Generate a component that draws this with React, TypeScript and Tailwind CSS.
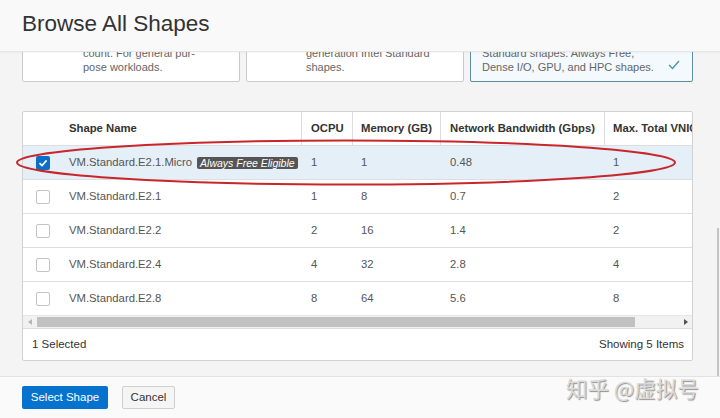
import React from 'react';

interface ShapeRow {
  name: string;
  ocpu: string;
  memory: string;
  bandwidth: string;
  vnics: string;
  free?: boolean;
}

const rows: ShapeRow[] = [
  { name: 'VM.Standard.E2.1.Micro', ocpu: '1', memory: '1', bandwidth: '0.48', vnics: '1', free: true },
  { name: 'VM.Standard.E2.1', ocpu: '1', memory: '8', bandwidth: '0.7', vnics: '2' },
  { name: 'VM.Standard.E2.2', ocpu: '2', memory: '16', bandwidth: '1.4', vnics: '2' },
  { name: 'VM.Standard.E2.4', ocpu: '4', memory: '32', bandwidth: '2.8', vnics: '4' },
  { name: 'VM.Standard.E2.8', ocpu: '8', memory: '64', bandwidth: '5.6', vnics: '8' },
];

const cols = 'grid grid-cols-[37px_241px_51px_88px_164px_120px] w-[701px]';

function Checkbox({ checked }: { checked?: boolean }) {
  if (checked) {
    return (
      <div className="w-[14px] h-[14px] rounded-[2px] bg-[#0a6fc9] flex items-center justify-center">
        <svg width="10" height="10" viewBox="0 0 10 10">
          <polyline points="1.5,5.2 4,7.6 8.6,2.4" fill="none" stroke="#fff" strokeWidth="1.6" />
        </svg>
      </div>
    );
  }
  return <div className="w-[14px] h-[14px] rounded-[2px] border border-[#c4c4c4] bg-white" />;
}

export default function App() {
  return (
    <div className="relative w-[720px] h-[418px] flex flex-col overflow-hidden font-['Liberation_Sans',Arial,sans-serif] text-[#333]">
      {/* Dialog header */}
      <div className="h-[52px] shrink-0 bg-[#f9f9f9] border-b border-[#e6e6e6] flex items-center px-[22px] shadow-[0_1px_2px_rgba(0,0,0,0.04)] z-10">
        <h1 className="text-[22.5px] text-[#333] leading-none -mt-[2px]">Browse All Shapes</h1>
      </div>

      {/* Scrolled content */}
      <div className="relative flex-1 bg-[#f4f4f4] overflow-hidden pl-[22px] pr-[27px] border-b border-[#e2e2e2]">
        {/* Shape series cards, scrolled past the top */}
        <div className="grid grid-cols-[218px_218px_1fr] gap-[6px] -mt-[29px]">
          <div className="bg-white border border-[#cccccc] rounded-[2px] pl-[60px] pr-3 pt-[22px] pb-[7px] text-[11px] leading-[14px] text-[#666]">
            <span className="block">count. For general pur-</span>
            <span className="block">pose workloads.</span>
          </div>
          <div className="bg-white border border-[#cccccc] rounded-[2px] pl-[59px] pr-3 pt-[22px] pb-[7px] text-[11px] leading-[14px] text-[#666]">
            <span className="block">generation Intel Standard</span>
            <span className="block">shapes.</span>
          </div>
          <div className="bg-[#f3f9fc] border border-[#5f8e9c] rounded-[2px] pl-[11px] pr-[12px] pt-[22px] pb-[7px] text-[11px] leading-[14px] text-[#666] flex items-end justify-between">
            <div>
              <span className="block">Standard shapes. Always Free,</span>
              <span className="block">Dense I/O, GPU, and HPC shapes.</span>
            </div>
            <svg width="12" height="10" viewBox="0 0 12 10" className="mb-[4px]">
              <polyline points="1,5 4.5,8.5 11,1" fill="none" stroke="#4f93a8" strokeWidth="1.4" />
            </svg>
          </div>
        </div>

        {/* Shapes table */}
        <div className="mt-[29px] bg-white border border-[#d2d2d2] rounded-[2px] overflow-hidden">
          <div className="overflow-hidden">
            <div className={`${cols} h-[33px] text-[11.3px] font-bold text-[#333]`}>
              <div />
              <div className="flex items-center pl-[9px]">Shape Name</div>
              <div className="flex items-center pl-[9px] border-l border-[#dcdcdc]">OCPU</div>
              <div className="flex items-center pl-[8px] border-l border-[#dcdcdc]">Memory (GB)</div>
              <div className="flex items-center pl-[9px] border-l border-[#dcdcdc]">Network Bandwidth (Gbps)</div>
              <div className="flex items-center pl-[8px] border-l border-[#dcdcdc] whitespace-nowrap">Max. Total VNICs</div>
            </div>
            {rows.map((row) => (
              <div
                key={row.name}
                className={`${cols} h-[34px] border-t border-[#dedede] text-[11.3px] text-[#555] ${row.free ? 'bg-[#e4eff8]' : 'bg-white'}`}
              >
                <div className="flex items-center justify-center pl-[2px]">
                  <Checkbox checked={row.free} />
                </div>
                <div className="flex items-center pl-[9px] gap-[5px] whitespace-nowrap">
                  <span>{row.name}</span>
                  {row.free && (
                    <span className="bg-[#555] text-white italic text-[10.5px] leading-[12px] px-[3px] rounded-[2px] whitespace-nowrap">
                      Always Free Eligible
                    </span>
                  )}
                </div>
                <div className="flex items-center pl-[10px]">{row.ocpu}</div>
                <div className="flex items-center pl-[9px]">{row.memory}</div>
                <div className="flex items-center pl-[10px]">{row.bandwidth}</div>
                <div className="flex items-center pl-[9px]">{row.vnics}</div>
              </div>
            ))}
          </div>

          {/* Horizontal scrollbar */}
          <div className="h-[13px] border-t border-[#e6e6e6] bg-[#f1f1f1] flex items-center">
            <div className="w-[14px] flex justify-center">
              <svg width="4" height="6" viewBox="0 0 4 6">
                <polygon points="4,0 0,3 4,6" fill="#b5b5b5" />
              </svg>
            </div>
            <div className="h-[10px] w-[598px] bg-[#c1c1c1]" />
            <div className="flex-1 flex justify-end pr-[4px]">
              <svg width="4" height="6" viewBox="0 0 4 6">
                <polygon points="0,0 4,3 0,6" fill="#505050" />
              </svg>
            </div>
          </div>

          <div className="h-[32px] border-t border-[#dedede] flex items-center justify-between pl-[9px] pr-[8px] text-[11.5px] text-[#333]">
            <span>1 Selected</span>
            <span>Showing 5 Items</span>
          </div>
        </div>

        {/* Page scrollbar thumb */}
        <div className="absolute right-[1px] top-[176px] w-[2px] h-[148px] bg-[#c4c4c4]" />
      </div>

      {/* Dialog footer */}
      <div className="h-[41px] shrink-0 bg-[#fafafa] flex items-center gap-[14px] px-[22px]">
        <button className="h-[23px] w-[86px] rounded-[2px] bg-[#0572ce] text-white text-[11.5px]">Select Shape</button>
        <button className="h-[23px] w-[53px] rounded-[2px] bg-[#f5f5f5] border border-[#cfcfcf] text-[#333] text-[11.5px]">Cancel</button>
      </div>

      {/* Red annotation */}
      <svg className="absolute left-0 top-0 pointer-events-none" width="720" height="418">
        <ellipse cx="346" cy="162.5" rx="329" ry="22" fill="none" stroke="#c9262c" strokeWidth="2" />
      </svg>

      {/* Watermark */}
      <div className="absolute left-[566px] top-[377px] text-[21.5px] leading-none text-[#dadada] [text-shadow:1px_1px_1px_#909090] font-['Noto_Sans_CJK_SC',sans-serif] whitespace-nowrap">
        知乎 @虚拟号
      </div>
    </div>
  );
}
